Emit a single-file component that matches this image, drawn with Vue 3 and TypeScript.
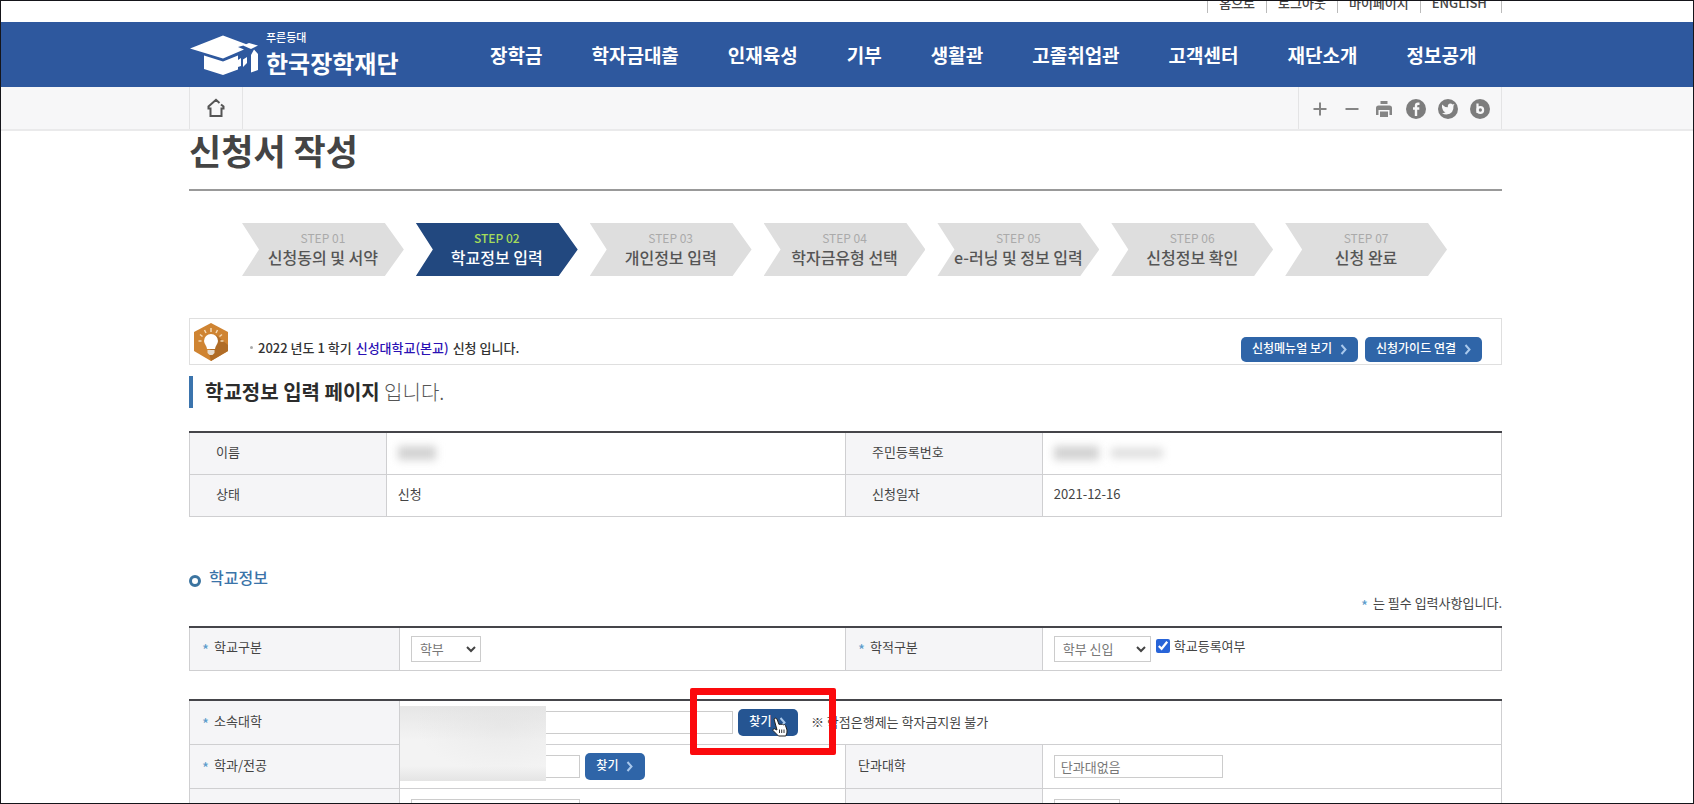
<script setup lang="ts">
import { ref } from 'vue'

interface Step {
  no: string
  label: string
}

const utilities: string[] = ['홈으로', '로그아웃', '마이페이지', 'ENGLISH']
const menus: string[] = ['장학금', '학자금대출', '인재육성', '기부', '생활관', '고졸취업관', '고객센터', '재단소개', '정보공개']
const steps: Step[] = [
  { no: 'STEP 01', label: '신청동의 및 서약' },
  { no: 'STEP 02', label: '학교정보 입력' },
  { no: 'STEP 03', label: '개인정보 입력' },
  { no: 'STEP 04', label: '학자금유형 선택' },
  { no: 'STEP 05', label: 'e-러닝 및 정보 입력' },
  { no: 'STEP 06', label: '신청정보 확인' },
  { no: 'STEP 07', label: '신청 완료' },
]
const currentStep = 1

const schoolType = ref('학부')
const enrollType = ref('학부 신입')
const registered = ref(true)
const university = ref('')
const major = ref('')
const college = ref('단과대없음')
const extraLeft = ref('')
const extraRight = ref('')
</script>

<template>
  <div class="page">
    <div class="util-bar">
      <ul class="wrap util">
        <li v-for="u in utilities" :key="u"><a href="#">{{ u }}</a></li>
      </ul>
    </div>

    <header class="gnb">
      <div class="wrap gnb-inner">
        <a href="#" class="logo" aria-label="푸른등대 한국장학재단">
          <svg class="cap" viewBox="0 0 70 40" aria-hidden="true">
            <path d="M1 13.500 34 .5 58 9.500 49 12 55 14.500 34 23.500Z" fill="#fff" />
            <path d="M15 20.500 34 26.500 49 20.500 49 25 52 23 52 31 49 32 49 34.500 34 40 15 34Z" fill="#fff" />
            <path d="M54 10.500 60 8 69 10.500 62 14Z" fill="#fff" />
            <path d="M54 24.500 58 22 58 28 54 32ZM62 20 65 14.500 69 19 69 35 62 37.500Z" fill="#fff" />
          </svg>
          <span class="logo-text">
            <span class="logo-sub">푸른등대</span>
            <span class="logo-main">한국장학재단</span>
          </span>
        </a>
        <nav class="menu">
          <a v-for="m in menus" :key="m" href="#">{{ m }}</a>
        </nav>
      </div>
    </header>

    <div class="sub-bar">
      <div class="wrap sub-inner">
        <a href="#" class="home" aria-label="홈">
          <svg width="18" height="20" viewBox="0 0 18 20" fill="none" stroke="#555" stroke-width="2">
            <path d="M12.500 5 9 1.800 1.500 8.500V10.500H3.500V18H14.500V10.500H16.500V8.500L14 6.500" />
          </svg>
        </a>
        <div class="tools">
          <button type="button" aria-label="확대">
            <svg width="20" height="20" viewBox="0 0 20 20"><path d="M10 3.500V16.500M3.500 10H16.500" stroke="#858585" stroke-width="2" /></svg>
          </button>
          <button type="button" aria-label="축소">
            <svg width="20" height="20" viewBox="0 0 20 20"><path d="M3.500 10H16.500" stroke="#858585" stroke-width="2" /></svg>
          </button>
          <button type="button" aria-label="인쇄">
            <svg width="20" height="20" viewBox="0 0 20 20">
              <path d="M6.500 2H13.500V5H6.500ZM4.500 6.500H15.500Q18 6.500 18 9V16H15.500V11H4.500V16H2V9Q2 6.500 4.500 6.500ZM6 12.500H14V18H6Z" fill="#858585" />
            </svg>
          </button>
          <button type="button" aria-label="페이스북">
            <svg width="20" height="20" viewBox="0 0 20 20">
              <circle cx="10" cy="10" r="10" fill="#7d7d7d" />
              <path d="M13.500 4.800H12Q10 4.800 10 7V17M7 9.500H13.300" fill="none" stroke="#f7f7f8" stroke-width="2.400" />
            </svg>
          </button>
          <button type="button" aria-label="트위터">
            <svg width="20" height="20" viewBox="0 0 20 20">
              <circle cx="10" cy="10" r="10" fill="#7d7d7d" />
              <path d="M4 5.500Q6.500 8.200 9.800 8.300 9.500 4.800 12.500 4.600 13.700 4.600 14.500 5.500L16.500 5 15.500 6.800Q16 15 8.500 15.500 6 15.500 4 14.300 6 14.300 7.500 13.200 5.500 12.800 5 11.300L4 8.500Z" fill="#f7f7f8" />
            </svg>
          </button>
          <button type="button" aria-label="블로그">
            <svg width="20" height="20" viewBox="0 0 20 20">
              <circle cx="10" cy="10" r="10" fill="#7d7d7d" />
              <path d="M7.500 4.500V14" stroke="#f7f7f8" stroke-width="2.200" />
              <circle cx="10.300" cy="11" r="2.800" fill="none" stroke="#f7f7f8" stroke-width="2.200" />
            </svg>
          </button>
        </div>
      </div>
    </div>

    <main class="wrap">
      <h1 class="title">신청서 작성</h1>

      <ol class="steps">
        <li v-for="(s, i) in steps" :key="s.no" :class="{ on: i === currentStep }">
          <span class="no">{{ s.no }}</span>
          <strong>{{ s.label }}</strong>
        </li>
      </ol>

      <section class="notice">
        <svg class="bulb" width="34" height="38" viewBox="0 0 34 38" aria-hidden="true">
          <path d="M17 0 34 9V28L17 38 0 28V9Z" fill="#cf8432" />
          <path d="M22 12 34 22V28L17 38 15 30Z" fill="#b06c26" />
          <path d="M17 11A7 7 0 0 1 24 18C24 21 21 23 21 26H13C13 23 10 21 10 18A7 7 0 0 1 17 11Z" fill="#fff" />
          <path d="M13.500 27H20.500V30L18.500 32H15.500L13.500 30Z" fill="#e6dccf" />
          <path d="M17 5V9M10.500 7 12 10M23.500 7 22 10M6 11.500 8.500 13.500M28 11.500 25.500 13.500M4.500 18H7.500M29.500 18H26.500" stroke="#f4d9b4" stroke-width="1.500" />
        </svg>
        <p><i class="dot"></i>2022 년도 1 학기 <b>신성대학교(본교)</b> 신청 입니다.</p>
        <div class="notice-buttons">
          <button type="button" class="btn">신청메뉴얼 보기
            <svg width="7" height="11" viewBox="0 0 7 11"><path d="M1.500 1 5.500 5.500 1.500 10" /></svg>
          </button>
          <button type="button" class="btn">신청가이드 연결
            <svg width="7" height="11" viewBox="0 0 7 11"><path d="M1.500 1 5.500 5.500 1.500 10" /></svg>
          </button>
        </div>
      </section>

      <h2 class="page-name"><b>학교정보 입력 페이지</b> 입니다.</h2>

      <table class="grid info">
        <colgroup><col class="c15"><col class="c35"><col class="c15"><col class="c35"></colgroup>
        <tbody>
          <tr>
            <th scope="row">이름</th>
            <td><span class="masked short"></span></td>
            <th scope="row">주민등록번호</th>
            <td><span class="masked mid"></span><span class="masked light"></span></td>
          </tr>
          <tr>
            <th scope="row">상태</th>
            <td>신청</td>
            <th scope="row">신청일자</th>
            <td>2021-12-16</td>
          </tr>
        </tbody>
      </table>

      <h3 class="section"><i class="ring"></i>학교정보</h3>
      <p class="required-note"><i class="star">*</i>는 필수 입력사항입니다.</p>

      <table class="grid form">
        <colgroup><col class="c16"><col class="c34"><col class="c15"><col class="c35"></colgroup>
        <tbody>
          <tr>
            <th scope="row"><i class="star">*</i><label for="school-type">학교구분</label></th>
            <td>
              <span class="select narrow">
                <select id="school-type" v-model="schoolType"><option>학부</option><option>대학원</option></select>
                <svg width="10" height="7" viewBox="0 0 10 7"><path d="M1 1 5 5 9 1" /></svg>
              </span>
            </td>
            <th scope="row"><i class="star">*</i><label for="enroll-type">학적구분</label></th>
            <td>
              <div class="line">
                <span class="select wide">
                  <select id="enroll-type" v-model="enrollType"><option>학부 신입</option><option>학부 재학</option></select>
                  <svg width="10" height="7" viewBox="0 0 10 7"><path d="M1 1 5 5 9 1" /></svg>
                </span>
                <label class="check"><input v-model="registered" type="checkbox">학교등록여부</label>
              </div>
            </td>
          </tr>
        </tbody>
      </table>

      <table class="grid form school">
        <colgroup><col class="c16"><col class="c34"><col class="c15"><col class="c35"></colgroup>
        <tbody>
          <tr>
            <th scope="row"><i class="star">*</i><label for="university">소속대학</label></th>
            <td colspan="3" class="over">
              <div class="line">
                <input id="university" v-model="university" class="text long" type="text">
                <span class="target">
                  <button type="button" class="btn find hover">찾기
                    <svg width="7" height="11" viewBox="0 0 7 11"><path d="M1.500 1 5.500 5.500 1.500 10" /></svg>
                  </button>
                  <span class="highlight"></span>
                  <svg class="pointer" width="16" height="20" viewBox="0 0 16 20" aria-hidden="true">
                    <path d="M2 2Q3.500 .3 5 2L7 7.500Q8 6.500 9 7.500 10.200 6.500 11.300 7.800 12.500 7 13.500 8.500L15 13Q15.500 16 13.800 19H6.500L1 13.500Q.5 12 2.200 11.700L5 13Z" fill="#fff" stroke="#222" stroke-width="1" stroke-linejoin="round" />
                    <path d="M7.500 12.500V16M9.700 12.500V16M12 12.500V16" stroke="#333" stroke-width="1" />
                  </svg>
                </span>
                <span class="hint">※ 학점은행제는 학자금지원 불가</span>
              </div>
              <span class="veil"></span>
            </td>
          </tr>
          <tr>
            <th scope="row"><i class="star">*</i><label for="major">학과/전공</label></th>
            <td>
              <div class="line">
                <input id="major" v-model="major" class="text" type="text">
                <button type="button" class="btn find">찾기
                  <svg width="7" height="11" viewBox="0 0 7 11"><path d="M1.500 1 5.500 5.500 1.500 10" /></svg>
                </button>
              </div>
            </td>
            <th scope="row"><label for="college">단과대학</label></th>
            <td><div class="line"><input id="college" v-model="college" class="text" type="text"></div></td>
          </tr>
          <tr>
            <th scope="row"></th>
            <td><div class="line"><input v-model="extraLeft" class="text" type="text" aria-label="추가 정보"></div></td>
            <th scope="row"></th>
            <td><div class="line"><input v-model="extraRight" class="text small" type="text" aria-label="추가 정보"></div></td>
          </tr>
        </tbody>
      </table>
    </main>
  </div>
</template>

<style>
body {
  margin: 0;
  background: #fff;
}
</style>

<style scoped>
* {
  box-sizing: border-box;
}
.page {
  height: 100vh;
  overflow: hidden;
  border: 1px solid #15151a;
  background: #fff;
  color: #444;
  font-family: "Noto Sans CJK KR", "Noto Sans", sans-serif;
  font-size: 13px;
  line-height: 20px;
}
a {
  color: inherit;
  text-decoration: none;
}
button,
input,
select {
  font: inherit;
}
i {
  font-style: normal;
}
.wrap {
  width: calc(100% - 379px);
  margin: 0 191px 0 188px;
}

/* utility links */
.util-bar {
  height: 21px;
  overflow: hidden;
}
.util {
  display: flex;
  justify-content: flex-end;
  margin-top: -8px;
  padding: 0;
  list-style: none;
  font-weight: 500;
}
.util li {
  padding: 0 11px;
  border-left: 1px solid #bbb;
}
.util li:last-child {
  padding-right: 14px;
  border-right: 1px solid #bbb;
}

/* main navigation */
.gnb {
  background: #2e589e;
  color: #fff;
}
.gnb-inner {
  display: flex;
  align-items: center;
  height: 65px;
}
.logo {
  display: flex;
  align-items: center;
  gap: 7px;
  width: 301px;
}
.cap {
  width: 70px;
  height: 40px;
}
.logo-text {
  display: flex;
  flex-direction: column;
}
.logo-sub {
  font-size: 11px;
  line-height: 16px;
  font-weight: 500;
}
.logo-main {
  font-size: 24px;
  line-height: 36px;
  font-weight: 700;
}
.menu {
  display: flex;
  gap: 49px;
  font-size: 19px;
  font-weight: 700;
  line-height: 28px;
  white-space: nowrap;
}

/* tool strip */
.sub-bar {
  background: #f7f7f8;
  border-bottom: 2px solid #eaeaeb;
}
.sub-inner {
  display: flex;
  justify-content: space-between;
  height: 42px;
}
.home {
  display: flex;
  align-items: center;
  justify-content: center;
  width: 54px;
  border: solid #e4e4e5;
  border-width: 0 1px;
}
.tools {
  display: flex;
  align-items: center;
  gap: 12px;
  padding: 2px 11px 0;
  border: solid #e4e4e5;
  border-width: 0 1px;
}
.tools button {
  display: flex;
  padding: 0;
  border: 0;
  background: none;
}

.title {
  margin: 0;
  padding-bottom: 20px;
  border-bottom: 2px solid #999;
  color: #444;
  font-size: 35px;
  line-height: 38px;
  font-weight: 700;
}

/* step arrows */
.steps {
  display: flex;
  gap: 12px;
  margin: 32px 0 42px;
  padding: 0 55px 0 53px;
  list-style: none;
}
.steps li {
  display: flex;
  flex: 1 1 0;
  flex-direction: column;
  align-items: center;
  justify-content: center;
  height: 53px;
  padding-bottom: 4px;
  background: #dedede;
  color: #555;
  white-space: nowrap;
  clip-path: polygon(0 0, calc(100% - 19px) 0, 100% 50%, calc(100% - 19px) 100%, 0 100%, 17px 50%);
}
.steps .no {
  color: #aaa;
  font-size: 12px;
  line-height: 18px;
}
.steps strong {
  font-size: 16px;
  line-height: 20px;
  font-weight: 500;
}
.steps .on {
  background: #22487f;
  color: #fff;
}
.steps .on .no {
  color: #a5dc5a;
  font-weight: 500;
}

/* notice */
.notice {
  display: flex;
  align-items: center;
  height: 47px;
  padding: 0 19px 0 4px;
  border: 1px solid #dfdfdf;
}
.notice p {
  display: flex;
  align-items: center;
  gap: 4px;
  margin: 0 0 0 22px;
  padding-top: 12px;
  color: #333;
  font-weight: 500;
}
.notice b {
  color: #2a10b4;
  font-weight: 500;
}
.dot {
  width: 3px;
  height: 3px;
  margin-right: 1px;
  border-radius: 2px;
  background: #aaa;
}
.notice-buttons {
  display: flex;
  gap: 7px;
  margin-left: auto;
  padding-top: 15px;
}
.btn {
  display: flex;
  align-items: center;
  justify-content: center;
  gap: 8px;
  width: 117px;
  height: 25px;
  padding: 0 0 2px;
  border: 0;
  border-radius: 5px;
  background: #2f65a8;
  color: #fff;
  font-size: 12px;
  font-weight: 500;
  white-space: nowrap;
}
.btn svg {
  margin-top: 3px;
  fill: none;
  stroke: #a9c8ec;
  stroke-width: 2;
}
.btn.find {
  width: 60px;
  height: 27px;
}
.btn.hover {
  background: #255592;
}

.page-name {
  margin: 11px 0 23px;
  padding-left: 12px;
  border-left: 4px solid #3b74ad;
  color: #555;
  font-size: 20px;
  line-height: 32px;
  font-weight: 300;
}
.page-name b {
  color: #2c2c2c;
  font-weight: 700;
}

/* tables */
.grid {
  width: 100%;
  border-collapse: collapse;
  border-top: 2px solid #45454a;
  table-layout: fixed;
}
.c15 { width: 15%; }
.c35 { width: 35%; }
.c16 { width: 16%; }
.c34 { width: 34%; }
.grid th,
.grid td {
  border: 1px solid #cfcfd1;
  padding: 0 11px;
  text-align: left;
  font-weight: 400;
}
.grid tr:first-child > * {
  border-top: 2px solid #45454a;
}
.grid th {
  background: #f5f5f7;
}
.info th,
.info td {
  height: 42px;
  padding-bottom: 3px;
}
.info th {
  padding-left: 26px;
}
.form th,
.form td {
  height: 44px;
}
.form th {
  padding: 0 0 2px 12px;
}
.school {
  margin-top: 28px;
}
.star {
  display: inline-block;
  width: 12px;
  color: #5b9bcb;
  font-size: 15px;
  line-height: 16px;
  text-align: left;
  vertical-align: -4px;
}
.masked {
  display: inline-block;
  width: 38px;
  height: 14px;
  vertical-align: middle;
  background: #d2d2d2;
  filter: blur(4px);
}
.masked.mid {
  width: 45px;
}
.masked.light {
  width: 52px;
  height: 10px;
  margin-left: 12px;
  background: #dedede;
}

.section {
  display: flex;
  align-items: center;
  gap: 8px;
  margin: 48px 0 4px;
  color: #3b74a9;
  font-size: 16px;
  line-height: 24px;
  font-weight: 500;
}
.ring {
  width: 12px;
  height: 12px;
  margin-top: 8px;
  border: 3px solid #3b74a0;
  border-radius: 50%;
}
.required-note {
  margin: 0 0 12px;
  text-align: right;
}

/* fields */
.line {
  display: flex;
  align-items: center;
  gap: 5px;
}
.select {
  position: relative;
  display: inline-flex;
}
.select select {
  width: 100%;
  height: 26px;
  padding: 0 8px;
  border: 1px solid #ccc;
  border-radius: 0;
  background: #fff;
  color: #777;
  appearance: none;
}
.select svg {
  position: absolute;
  right: 5px;
  top: 10px;
  fill: none;
  stroke: #444;
  stroke-width: 2;
  pointer-events: none;
}
.narrow {
  width: 70px;
  vertical-align: middle;
}
.wide {
  width: 97px;
}
.check {
  display: flex;
  align-items: center;
  gap: 4px;
  padding-bottom: 5px;
}
.check input {
  width: 14px;
  height: 14px;
  margin: 0;
  accent-color: #2864d8;
}
.text {
  width: 169px;
  height: 23px;
  padding: 0 6px;
  border: 1px solid #ccc;
  background: #fff;
  color: #777;
}
.text.long {
  width: 322px;
}
.text.small {
  width: 66px;
}
.hint {
  margin-left: 8px;
}
.over {
  position: relative;
}
.veil {
  position: absolute;
  left: 0;
  top: 5px;
  width: 146px;
  height: 75px;
  background:
    radial-gradient(ellipse at 70% 25%, #dedede66, transparent 60%),
    linear-gradient(180deg, #e6e6e6, #f3f3f3 45%, #f3f3f3 80%, #e4e4e4);
}
.target {
  position: relative;
}
.highlight {
  position: absolute;
  left: -48px;
  top: -21px;
  width: 146px;
  height: 67px;
  border: 7px solid #fb0a0d;
  border-radius: 2px;
  pointer-events: none;
}
.pointer {
  position: absolute;
  left: 34px;
  top: 8px;
  pointer-events: none;
}
</style>
